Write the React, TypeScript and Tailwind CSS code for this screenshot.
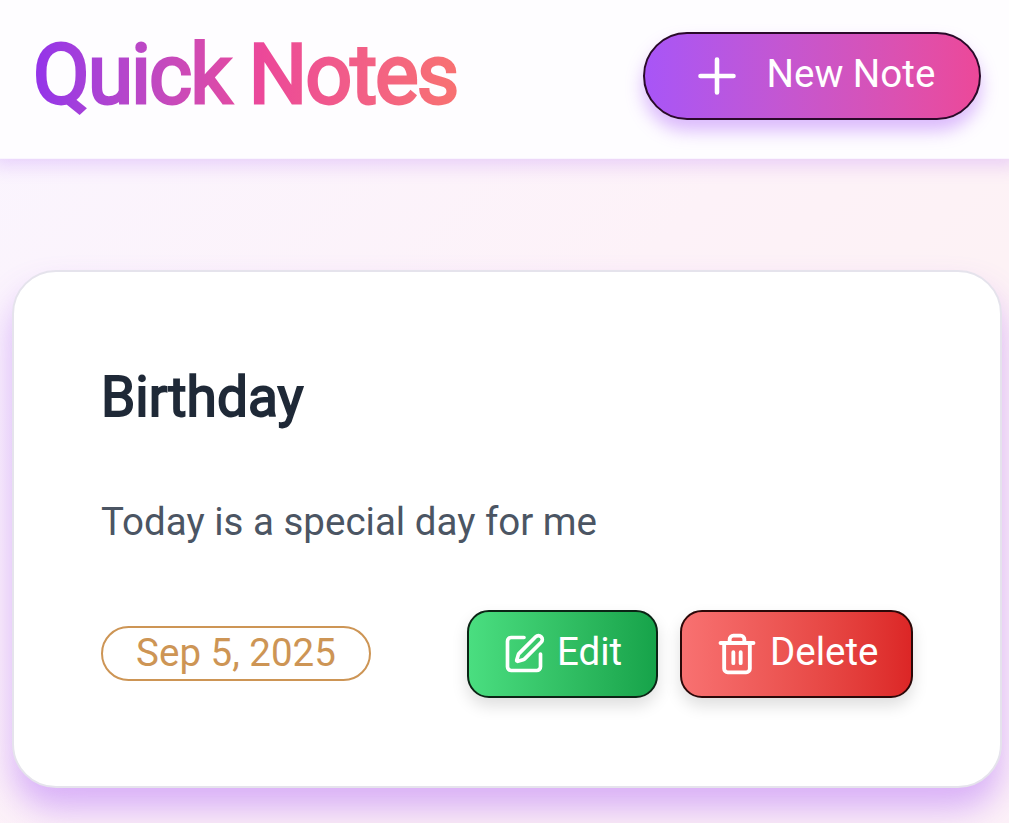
import React from "react";
import { SquarePen } from "lucide-react";

function TrashIcon() {
  return (
    <svg className="size-[44px] shrink-0" viewBox="0 0 24 24" fill="none" stroke="currentColor" strokeWidth="2.1" strokeLinecap="round" strokeLinejoin="round">
      <path d="M3 6h18M5 6v14a2 2 0 0 0 2 2h10a2 2 0 0 0 2-2V6M8 6V4a2 2 0 0 1 2-2h4a2 2 0 0 1 2 2v2M10 11v6M14 11v6" />
    </svg>
  );
}

export default function App() {
  return (
    <div className="h-[823px] overflow-hidden bg-[linear-gradient(135deg,#faf5ff_0px,#fdf2f8_640px,#fdf2f5_900px,#fdf2f8_1300px)] font-['Roboto',sans-serif]">
      <header className="flex h-[159px] items-start justify-between border-b border-[#faf5ff] bg-[#fefdff] pl-[33px] pr-[28px] pt-8 shadow-[0_-1px_17px_8px_rgba(168,85,247,0.22)]">
        <h1 className="bg-linear-to-r from-[#9333ea] via-[#ec4899] via-54% to-[#f87171] bg-clip-text text-[82.5px] leading-[86px] tracking-[-2.06px] text-transparent [-webkit-text-stroke:2.8px_transparent]">
          Quick Notes
        </h1>
        <button className="flex h-[88px] w-[338px] items-center rounded-full border-2 border-[#2a0a2a] bg-linear-to-r from-[#a855f7] to-[#ec4899] pl-[49.5px] text-[38.5px] text-white shadow-[0_11px_17px_rgba(168,85,247,0.4)]">
          <svg className="-mt-px size-[44px]" viewBox="0 0 24 24" fill="none" stroke="currentColor" strokeWidth="2.5" strokeLinecap="round">
            <path d="M12 3v18M3 12h18" />
          </svg>
          <span className="-mt-1 ml-[28px]">New Note</span>
        </button>
      </header>
      <main className="pl-[12px] pr-[7px] pt-[111px]">
        <article className="flex h-[518px] flex-col rounded-[44px] border-2 border-[#e5e3ec] bg-white pl-[87px] pr-[88px] shadow-[0_22px_34px_-1px_rgba(168,85,247,0.43)]">
          <h2 className="mt-[92px] text-[55px] leading-[66px] text-[#1f2937] [-webkit-text-stroke:1.8px_#1f2937]">Birthday</h2>
          <p className="mt-[66px] text-[38.5px] leading-[52px] text-[#4b5563]">Today is a special day for me</p>
          <div className="mt-[62px] flex items-center">
            <time className="-mt-0.5 flex h-[55px] w-[270px] items-center justify-center rounded-full border-2 border-[#cd9555] text-[38.5px] text-[#cd9555]">Sep 5, 2025</time>
            <div className="-mr-px ml-auto flex gap-[22px]">
              <button className="flex h-[88px] w-[191px] items-center rounded-[22px] border-2 border-[#0b2415] bg-linear-to-r from-[#4ade80] to-[#16a34a] pl-[33px] text-[38.5px] text-white shadow-[0_8px_16px_rgba(0,0,0,0.13)]">
                <SquarePen className="size-[44px] shrink-0" />
                <span className="-mt-1 ml-[11px]">Edit</span>
              </button>
              <button className="flex h-[88px] w-[233px] items-center rounded-[22px] border-2 border-[#2b0808] bg-linear-to-r from-[#f87171] to-[#dc2626] pl-[33px] text-[38.5px] text-white shadow-[0_8px_16px_rgba(0,0,0,0.13)]">
                <TrashIcon />
                <span className="-mt-1 ml-[11px]">Delete</span>
              </button>
            </div>
          </div>
        </article>
      </main>
    </div>
  );
}
